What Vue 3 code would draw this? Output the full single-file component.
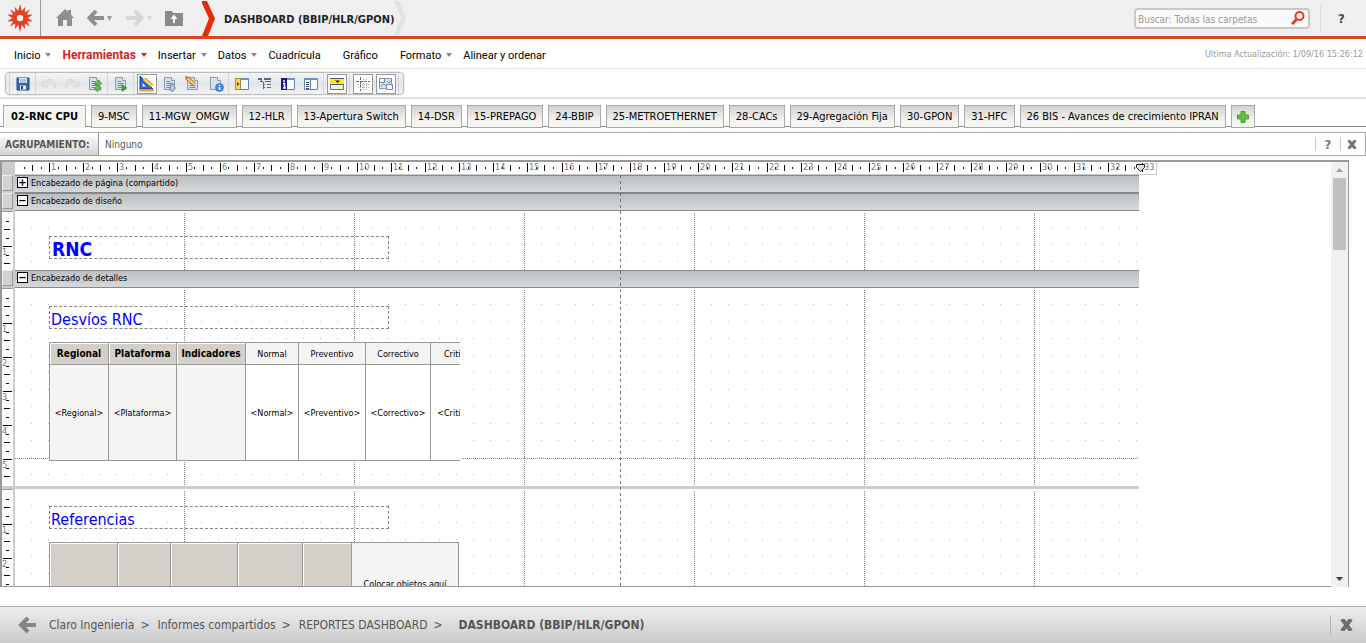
<script setup>
const menu = [
  { label: 'Inicio', arrow: true },
  { label: 'Herramientas', arrow: true, active: true },
  { label: 'Insertar', arrow: true },
  { label: 'Datos', arrow: true },
  { label: 'Cuadrícula' },
  { label: 'Gráfico' },
  { label: 'Formato', arrow: true },
  { label: 'Alinear y ordenar' },
]
const toolGroups = [
  [{ id: 'save', label: 'Guardar' }],
  [{ id: 'undo', label: 'Deshacer' }, { id: 'redo', label: 'Rehacer' }, { id: 'refresh', label: 'Actualizar' }],
  [{ id: 'run', label: 'Ejecutar' }],
  [{ id: 'design', label: 'Diseño', on: true }, { id: 'doc', label: 'Documento' }, { id: 'edit', label: 'Editar' }, { id: 'info', label: 'Información' }],
  [{ id: 'panel', label: 'Objetos' }, { id: 'tree', label: 'Estructura' }, { id: 'ipanel', label: 'Detalles' }, { id: 'list', label: 'Lista' }],
  [{ id: 'band', label: 'Bandas', on: true }],
  [{ id: 'grid', label: 'Mostrar cuadrícula', on: true }, { id: 'snap', label: 'Alinear', on: true }],
]
const tabs = ['02-RNC CPU', '9-MSC', '11-MGW_OMGW', '12-HLR', '13-Apertura Switch', '14-DSR', '15-PREPAGO', '24-BBIP', '25-METROETHERNET', '28-CACs', '29-Agregación Fija', '30-GPON', '31-HFC', '26 BIS - Avances de crecimiento IPRAN']
const columns = ['Regional', 'Plataforma', 'Indicadores', 'Normal', 'Preventivo', 'Correctivo', 'Critico']
const crumbs = ['Claro Ingenieria', 'Informes compartidos', 'REPORTES DASHBOARD']

const hTicks = Array.from({ length: 132 }, (_, i) => ({ n: i + 1, x: Math.round((i + 1) * 8.54) }))
const vTicks = (count) => Array.from({ length: count }, (_, i) => ({ n: i + 1, y: Math.round((i + 1) * 8.5) }))
const shortTicks = vTicks(6)
const tallTicks = vTicks(22)
const lastTicks = vTicks(11)
const majors = [169, 339, 509, 679, 849, 1019]
</script>

<template>
  <div class="app">
    <header class="top">
      <a class="logo" href="#" aria-label="Inicio">
        <svg width="26" height="28" viewBox="0 0 26 28">
          <path fill="#e2401f" d="M13 0l1.800 7 3.400-4.200-.5 5.600 5.300-2.900-3.200 5 6 .3-5.200 3.200 5.200 3.200-6 .3 3.200 5-5.300-2.900.5 5.600-3.400-4.200L13 28l-1.800-7-3.400 4.200.5-5.600L3 22.500l3.200-5-6-.3L5.400 14 .2 10.800l6-.3L3 5.500l5.300 2.900-.5-5.600L11.200 7z" />
          <circle cx="13" cy="14" r="3.200" fill="#efefef" />
        </svg>
      </a>
      <nav class="nav">
        <button class="bare" aria-label="Página de inicio">
          <svg width="18" height="18" viewBox="0 0 18 18" fill="#8e8e8e"><path d="M9 0l3 2.800V1h3v4.700L18 9h-2v8h-5v-6H7v6H2V9H0z" /></svg>
        </button>
        <button class="bare" aria-label="Atrás">
          <svg width="26" height="18" viewBox="0 0 26 18"><path d="M9 2L2.500 9 9 16M3 9h14" fill="none" stroke="#8e8e8e" stroke-width="4" /><path d="M20 7h5l-2.500 5z" fill="#999" /></svg>
        </button>
        <button class="bare" aria-label="Adelante">
          <svg width="26" height="18" viewBox="0 0 26 18"><path d="M9 2l6.500 7L9 16M15 9H0" fill="none" stroke="#d6d6d6" stroke-width="4" /><path d="M21 7h5l-2.500 5z" fill="#d6d6d6" /></svg>
        </button>
        <button class="bare" aria-label="Carpeta superior">
          <svg width="18" height="16" viewBox="0 0 18 16"><path d="M0 1h7l1 2h10v13H0z" fill="#8a8a8a" /><path d="M9 4.500L5.500 9H8v4h2V9h2.500z" fill="#fff" /></svg>
        </button>
      </nav>
      <svg width="15" height="36" viewBox="0 0 15 36"><path d="M-1 1h6l8 17.500L6 36H0l7-17.500z" fill="#e8290b" /></svg>
      <h1 class="crumb-title">DASHBOARD (BBIP/HLR/GPON)</h1>
      <svg width="14" height="36" viewBox="0 0 14 36"><path d="M0 1h5l7 17-7 17H0l7-17z" fill="#e2e2e2" /></svg>
      <label class="search">
        <input type="text" placeholder="Buscar: Todas las carpetas" aria-label="Buscar" />
        <svg width="14" height="14" viewBox="0 0 14 14" fill="none" stroke="#e8371c"><circle cx="8.500" cy="5" r="4" stroke-width="2" /><path d="M5.500 8.500L1 13" stroke-width="3" /></svg>
      </label>
      <button class="bare help" aria-label="Ayuda">?</button>
    </header>

    <div class="menubar">
      <nav class="menu">
        <button v-for="m in menu" :key="m.label" class="bare item" :class="{ active: m.active }">
          <span>{{ m.label }}</span><i class="caret" :class="{ none: !m.arrow }"></i>
        </button>
      </nav>
      <span class="updated">Última Actualización: 1/09/16 15:26:12</span>
    </div>

    <div class="toolrow">
      <div class="toolbar">
        <div v-for="(g, gi) in toolGroups" :key="gi" class="group">
          <button v-for="t in g" :key="t.id" class="bare tool" :class="{ on: t.on }" :aria-label="t.label">
            <svg width="16" height="16" viewBox="0 0 16 16">
              <template v-if="t.id === 'save'">
                <path d="M2 2h12v12H2z" fill="#3767b0" stroke="#234a88" /><path d="M4 2h8v5H4z" fill="#dfeaf8" /><path d="M5 4h6M5 6h6" stroke="#7d9cc8" /><path d="M5 9.500h6v4H5z" fill="#e9eff7" /><path d="M6 10h2v3H6z" fill="#23407a" />
              </template>
              <path v-else-if="t.id === 'undo'" d="M1 5v6h6L5 9q3-4 7-1 2 2 2 4 2-4-1-7-4-4-9 1L3 7z" fill="#e2e2d9" stroke="#d2d3cc" stroke-width=".6" />
              <path v-else-if="t.id === 'redo'" d="M15 5v6H9l2-2Q8 5 4 8q-2 2-2 4-2-4 1-7 4-4 9 1l1 1z" fill="#e2e2d9" stroke="#d2d3cc" stroke-width=".6" />
              <template v-else-if="['refresh', 'run', 'doc', 'edit', 'info'].includes(t.id)">
                <path d="M2.500 1.500h7l3 3v9h-10z" fill="#d5dfee" stroke="#8799b5" /><path d="M9.500 1.500v3h3" fill="#fff" stroke="#8799b5" />
                <path v-if="t.id !== 'info'" d="M4.500 5.500h4M4.500 7.500h6M4.500 9.500h6M4.500 11.500h6" stroke="#6f86aa" />
                <path v-if="t.id === 'refresh'" d="M8 6h3V4l4 3.500-4 3V9H8zM14 11h-3V9.500L7 13l4 3v-2h3z" fill="#5cb84f" stroke="#2f8a2b" stroke-width=".5" />
                <path v-if="t.id === 'run'" d="M9 8.500l5 3.500-5 3.500z" fill="#3fa535" stroke="#2b8527" stroke-width=".5" />
                <path v-if="t.id === 'doc'" d="M9 8h3v2l1.500 2-1.500 2-2 1.500L8 14z" fill="#b8c7dd" stroke="#7388aa" />
                <template v-if="t.id === 'edit'"><path d="M2 2l7 6" stroke="#a8812c" stroke-width="4" /><path d="M2 2l7 6" stroke="#ffd75b" stroke-width="2" /><path d="M0 0l3.500 1-2.500 3z" fill="#d35a3f" /></template>
                <template v-if="t.id === 'info'"><circle cx="11.500" cy="11.500" r="4" fill="#4c8be0" stroke="#2c63b5" stroke-width=".6" /><path d="M11.500 9v1M11.500 11v3" stroke="#fff" stroke-width="1.500" /></template>
              </template>
              <template v-else-if="t.id === 'design'">
                <path d="M1 0v13h13z" fill="#2c63cc" stroke="#173d92" /><path d="M3.500 7v3.500H7z" fill="#fff" /><path d="M5 3l8 7" stroke="#b98a28" stroke-width="4" /><path d="M5 3l8 7" stroke="#ffd97a" stroke-width="2" /><path d="M0 14.500h15" stroke="#e2a723" stroke-width="2" />
              </template>
              <template v-else-if="['panel', 'ipanel', 'list'].includes(t.id)">
                <path d="M1.500 2.500h13v11h-13z" fill="#f7fafd" stroke="#6682ad" /><path d="M1 2h14v2H1z" fill="#7090c4" />
                <path v-if="t.id === 'panel'" d="M1.500 2.500h5v11h-5z" fill="#ffd35c" stroke="#b18a32" /><path v-if="t.id === 'panel'" d="M3 6v4l2.500-2z" fill="#553c00" />
                <template v-if="t.id === 'ipanel'"><path d="M1 2h6v12H1z" fill="#1c1688" /><path d="M4 4v2M3 7.500h1.500V12M3 12h3" stroke="#fff" stroke-width="1.500" fill="none" /></template>
                <path v-if="t.id === 'list'" d="M3 6.500h3M3 8.500h3M3 10.500h3M3 12.500h3" stroke="#404a5c" /><path v-if="t.id === 'list'" d="M7.500 4v10" stroke="#6682ad" />
              </template>
              <path v-else-if="t.id === 'tree'" d="M1 2.500h4M7 2.500h7M3 5.500h3M8 5.500h6M6 8.500h2M10 8.500h4M6 11.500h2M10 11.500h4M1 3.500h4M7 3.500h7M4.500 3v3M6.500 6v7" stroke="#5b687b" fill="none" />
              <template v-else-if="t.id === 'band'">
                <path d="M1.500 2.500h13v11h-13z" fill="#f4f2df" stroke="#66738a" /><path d="M1 3h14v6H1z" fill="#ffe81c" /><path d="M1 2h14v1H1zM1 8h14v1H1z" fill="#4c5f86" /><path d="M6 4.500h5L8.500 7z" fill="#222" />
              </template>
              <template v-else-if="t.id === 'grid'">
                <path d="M5.500 1v14M1 5.500h14" stroke="#666" stroke-dasharray="3 1" /><path d="M8.500 3v12M11.500 3v12M3 8.500h12M3 11.500h12" stroke="#aaa" stroke-dasharray="1 1" />
              </template>
              <template v-else>
                <path d="M1.500 2.500h12v10h-12z" fill="#dbe4f1" stroke="#8294b5" /><path d="M1.500 2.500h5v4h-5zM8.500 8.500h6v5h-6z" fill="#f5f8fc" stroke="#7486a8" /><path d="M3 10l3-2 2 2M9 5l2 2 3-3" fill="none" stroke="#7486a8" />
              </template>
            </svg>
          </button>
        </div>
      </div>
    </div>

    <div class="tabs">
      <button v-for="(t, i) in tabs" :key="t" class="tab" :class="{ current: i === 0 }">{{ t }}</button>
      <button class="tab plus" aria-label="Agregar">
        <svg width="12" height="12" viewBox="0 0 12 12"><path d="M4 .5h4V4h3.500v4H8v3.500H4V8H.5V4H4z" fill="#62bf45" stroke="#4b9d3c" /></svg>
      </button>
    </div>

    <div class="groupbar">
      <span class="glabel">AGRUPAMIENTO:</span>
      <span class="gvalue">Ninguno</span>
      <button class="bare gbtn" aria-label="Ayuda">?</button>
      <button class="bare gbtn" aria-label="Cerrar"><svg width="10" height="9" viewBox="0 0 10 9"><path d="M1.500 0l7 9M8.500 0l-7 9" stroke="#777" stroke-width="3" /></svg></button>
    </div>

    <main class="canvas">
      <div class="view">
        <div class="hrule">
          <div class="corner"></div>
          <svg class="hscale" width="1142" height="13">
            <template v-for="t in hTicks" :key="t.n">
              <rect v-if="t.n % 4 === 0" :x="t.x" y="1" width="1" height="9" fill="#000" />
              <rect v-else-if="t.n % 2 === 0" :x="t.x" y="3" width="1" height="6" fill="#111" />
              <rect v-else :x="t.x" y="5" width="1" height="2" fill="#111" />
              <text v-if="t.n % 4 === 0" :x="t.x + 2" y="8">{{ t.n / 4 }}</text>
            </template>
            <path d="M1121.500 2.500h8v3l-4 4-4-4z" fill="#ddd" stroke="#222" />
          </svg>
        </div>

        <section class="bandrow"><div class="cell"></div><div class="band"><button class="fold" aria-label="Expandir">+</button><span>Encabezado de página (compartido)</span></div></section>
        <section class="bandrow"><div class="cell"></div><div class="band"><button class="fold" aria-label="Contraer">−</button><span>Encabezado de diseño</span></div></section>

        <section class="body plain">
          <svg class="vrule" width="11"><template v-for="t in shortTicks" :key="t.n"><rect :x="t.n % 4 === 0 ? 1 : t.n % 2 === 0 ? 2 : 4" :y="t.y" :width="t.n % 4 === 0 ? 9 : t.n % 2 === 0 ? 6 : 3" height="1" /><text v-if="t.n % 4 === 0" x="0" :y="t.y + 9">{{ t.n / 4 }}</text></template></svg>
          <div class="sheet short">
            <svg class="gridlines" width="100%" height="100%">
              <defs><pattern id="dots" width="17" height="17" patternUnits="userSpaceOnUse"><rect x="16" y="16" width="1" height="1" fill="#bdbdbd" /></pattern></defs>
              <rect width="100%" height="100%" fill="url(#dots)" />
              <line v-for="x in majors" :key="x" :x1="x + 0.5" :x2="x + 0.5" y1="2" y2="100%" class="major" />
            </svg>
            <div class="box strong">RNC</div>
          </div>
        </section>

        <section class="bandrow"><div class="cell"></div><div class="band"><button class="fold" aria-label="Contraer">−</button><span>Encabezado de detalles</span></div></section>

        <section class="body">
          <svg class="vrule" width="11"><template v-for="t in tallTicks" :key="t.n"><rect :x="t.n % 4 === 0 ? 1 : t.n % 2 === 0 ? 2 : 4" :y="t.y" :width="t.n % 4 === 0 ? 9 : t.n % 2 === 0 ? 6 : 3" height="1" /><text v-if="t.n % 4 === 0" x="0" :y="t.y + 9">{{ t.n / 4 }}</text></template></svg>
          <div class="sheet">
            <svg class="gridlines" width="100%" height="100%">
              <rect width="100%" height="100%" fill="url(#dots)" />
              <line v-for="x in majors" :key="x" :x1="x + 0.5" :x2="x + 0.5" y1="2" y2="100%" class="major" />
              <line x1="0" x2="100%" y1="170.5" y2="170.5" class="major" />
            </svg>
            <div class="box">Desvíos RNC</div>
            <div class="clip">
              <table class="data">
                <colgroup><col class="w59" /><col class="w68" /><col class="w69" /><col class="w53" /><col class="w67" /><col class="w65" /><col class="w53" /></colgroup>
                <thead><tr><th v-for="(c, i) in columns" :key="c" :class="{ metric: i > 2 }">{{ c }}</th></tr></thead>
                <tbody><tr><td v-for="(c, i) in columns" :key="c" :class="{ metric: i > 2 }">{{ i === 2 ? '' : `<${c}>` }}</td></tr></tbody>
              </table>
            </div>
          </div>
        </section>

        <section class="body plain">
          <svg class="vrule" width="11"><template v-for="t in lastTicks" :key="t.n"><rect :x="t.n % 4 === 0 ? 1 : t.n % 2 === 0 ? 2 : 4" :y="t.y" :width="t.n % 4 === 0 ? 9 : t.n % 2 === 0 ? 6 : 3" height="1" /><text v-if="t.n % 4 === 0" x="0" :y="t.y + 9">{{ t.n / 4 }}</text></template></svg>
          <div class="sheet final">
            <svg class="gridlines" width="100%" height="100%">
              <rect width="100%" height="100%" fill="url(#dots)" />
              <line v-for="x in majors" :key="x" :x1="x + 0.5" :x2="x + 0.5" y1="2" y2="100%" class="major" />
            </svg>
            <div class="box">Referencias</div>
            <table class="data refs">
              <colgroup><col class="w68" /><col class="w53" /><col class="w67" /><col class="w65" /><col class="w49" /><col class="w107" /></colgroup>
              <tbody><tr><th></th><th></th><th></th><th></th><th></th><td>Colocar objetos aquí</td></tr></tbody>
            </table>
          </div>
        </section>
        <div class="pagebreak"></div>
      </div>
      <div class="scroll">
        <svg width="7" height="4" viewBox="0 0 7 4"><path d="M0 4h7L3.500 0z" fill="#a0a0a0" /></svg>
        <div class="thumb"></div>
        <svg width="7" height="4" viewBox="0 0 7 4"><path d="M0 0h7L3.500 4z" fill="#404040" /></svg>
      </div>
    </main>

    <footer class="foot">
      <button class="bare fback" aria-label="Volver"><svg width="19" height="18" viewBox="0 0 19 18"><path d="M10 2L3 9l7 7M3 9h15" fill="none" stroke="#858585" stroke-width="4" /></svg></button>
      <template v-for="c in crumbs" :key="c"><a href="#">{{ c }}</a><span class="gt">&gt;</span></template>
      <strong>DASHBOARD (BBIP/HLR/GPON)</strong>
      <button class="bare fclose" aria-label="Cerrar"><svg width="13" height="12" viewBox="0 0 13 12"><path d="M2 0l9 12M11 0L2 12" stroke="#6d6d6d" stroke-width="4" /></svg></button>
    </footer>
  </div>
</template>

<style>
body { margin: 0; background: #fff; }
</style>

<style scoped>
* { box-sizing: border-box; }
.app { height: 100vh; min-width: 1280px; display: flex; flex-direction: column; font-family: "DejaVu Sans Condensed", "DejaVu Sans", sans-serif; font-size: 11px; color: #000; overflow: hidden; }
button { font: inherit; color: inherit; }
.bare { border: 0; background: none; padding: 0; display: flex; align-items: center; justify-content: center; }
svg { display: block; flex: none; }

.top { flex: none; height: 39px; display: flex; align-items: center; background: #efefef; border-bottom: 3px solid #e0401f; }
.logo { width: 41px; height: 36px; border-right: 1px solid #999; display: flex; align-items: center; justify-content: center; }
.nav { display: flex; align-items: center; width: 161px; padding-left: 15px; gap: 13px; }
.crumb-title { margin: 3px 0 0 7px; font-size: 11px; font-weight: bold; color: #222; white-space: nowrap; }
.search { margin-left: auto; width: 176px; height: 21px; display: flex; align-items: center; border: 2px solid #c8c8c8; border-radius: 4px; background: #fafafa; padding: 0 3px 0 2px; }
.search input { flex: 1; min-width: 0; border: 0; background: none; padding: 2px 0 0; font: inherit; font-size: 10px; outline: none; }
.search input::placeholder { color: #999; opacity: 1; }
.help { width: 46px; height: 26px; margin-left: 10px; padding-right: 4px; border-left: 1px solid #ddd; font-size: 13px; font-weight: bold; color: #444; }

.menubar { flex: none; height: 30px; display: flex; align-items: center; justify-content: space-between; border-bottom: 1px solid #e4e4e4; }
.menu { display: flex; gap: 11px; padding: 3px 0 0 14px; font-family: Roboto, sans-serif; }
.item { white-space: nowrap; }
.caret { width: 6px; margin-left: 5px; border: solid transparent; border-width: 4px 3px 0; border-top-color: #888; }
.active { color: #dd1d21; font-weight: bold; font-size: 12px; }
.active .caret { border-top-color: #dd1d21; }
.caret.none { visibility: hidden; }
.updated { font-size: 9px; color: #999; padding-right: 3px; }

.toolrow { flex: none; height: 30px; padding: 3px 5px 0; border-bottom: 2px solid #dcdcdc; }
.toolbar { width: max-content; height: 23px; display: flex; border: 1px solid #bcbcbc; border-radius: 4px; padding: 0 4px 0 3px; background: linear-gradient(#f4f4f4, #e3e6ea 50%, #f2f2f2); box-shadow: 0 0 0 1px #f0f0f0; }
.group { display: flex; gap: 3px; padding: 0 2px 0 3px; border-left: 1px solid #d5d5d5; align-items: center; }
.group:last-child { border-right: 1px solid #d5d5d5; }
.tool { width: 20px; height: 20px; }
.on { border: 1px solid #999; background: #fff; }

.tabs { flex: none; display: flex; align-items: flex-end; gap: 5px; padding: 6px 3px 0; height: 29px; margin-bottom: 4px; background: linear-gradient(#888, #888) 0 27px / 100% 1px no-repeat; }
.tab { height: 23px; border: 1px solid #aaa; padding: 0 6px; background: linear-gradient(#d5d0cb, #f4f4f1 70%); white-space: nowrap; font-size: 11px; flex: none; }
.current { background: #f4f4f1; border-bottom-color: #f4f4f1; padding: 0 7px; font-weight: bold; }
.plus { width: 24px; padding: 0 5px; }

.groupbar { flex: none; height: 24px; display: flex; align-items: center; border: 1px solid #aaa; border-left: 0; color: #555; font-size: 10px; margin-bottom: 4px; }
.glabel { width: 99px; height: 23px; line-height: 23px; padding-left: 5px; font-weight: bold; background: linear-gradient(#fff, #d4d4d4); border-right: 1px solid #999; border-bottom: 1px solid #999; }
.gvalue { margin: 0 auto 0 6px; }
.gbtn { width: 25px; height: 14px; border-left: 1px solid #ccc; font-size: 13px; font-weight: bold; color: #777; }
.gbtn:last-child { padding-right: 2px; }

.canvas { flex: 1; min-height: 0; display: flex; margin: 0 17px 19px 0; border-top: 2px solid #999; border-right: 1px solid #999; }
.view { position: relative; flex: 1; min-width: 0; overflow: hidden; border-left: 2px solid #999; border-bottom: 1px solid #999; background: linear-gradient(90deg, #ccc 13px, transparent 13px); }
.hrule { display: flex; height: 13px; }
.corner { width: 13px; background: #ccc; }
.hscale { border-right: 1px solid #ccc; border-bottom: 1px solid #ccc; background: #fff; }
.hscale text { font-size: 9px; fill: #777; }
.bandrow { display: flex; width: 1137px; height: 18px; }
.cell { width: 11px; height: 16px; flex: none; background: #d2d2d2; border: 1px solid #999; border-left-color: #eee; border-top-color: #eee; }
.band { flex: 1; margin-left: 2px; display: flex; align-items: flex-start; gap: 3px; padding: 1px 2px 0; background: linear-gradient(#bcbec0, #d6dadd); border-top: 1px solid #888; border-bottom: 1px solid #888; font-size: 9px; line-height: 13px; }
.fold { width: 11px; height: 11px; padding: 0; border: 1px solid #000; background: #fff; font-size: 11px; line-height: 8px; font-weight: bold; flex: none; }
.body { display: flex; width: 1137px; border-bottom: 3px solid #ccc; }
.plain { border-bottom: 0; }
.vrule { width: 11px; height: auto; background: #fff; overflow: hidden; contain: size; border-top: 1px solid #999; }
.vrule text { font-size: 9px; fill: #777; }
.sheet { position: relative; flex: 1; padding: 18px 0 25px 34px; background: #fff; margin-left: 2px; }
.short { padding: 25px 0 11px 34px; }
.final { padding-top: 17px; }
.gridlines { position: absolute; top: 0; left: 0; }
.major { stroke: #888; stroke-dasharray: 1 1; }
.box { position: relative; width: 340px; height: 23px; border: 1px dashed #888; padding-left: 1px; font-size: 16px; line-height: 25px; color: #00f; }
.box.strong { padding-left: 2px; font-size: 19px; font-weight: bold; }
.clip { position: relative; width: 411px; overflow: hidden; margin-top: 13px; }
.data { position: relative; width: 435px; table-layout: fixed; border-collapse: collapse; background: #fff; }
.data th, .data td { border: 1px solid #999; padding: 0; text-align: center; font-size: 9px; white-space: nowrap; }
.data th { height: 22px; background: #d4cfc8; font-size: 10px; font-weight: bold; box-shadow: inset 1px 1px #fff; }
.data td { height: 96px; background: #f4f4f3; }
.data th.metric { background: #f4f4f3; font-size: 9px; font-weight: normal; box-shadow: none; }
.data td.metric { background: #fff; }
.refs { width: 410px; margin-top: 13px; }
.data.refs td { height: 83px; }
.w49 { width: 49px; }
.w53 { width: 53px; }
.w59 { width: 59px; }
.w65 { width: 65px; }
.w67 { width: 67px; }
.w68 { width: 68px; }
.w69 { width: 69px; }
.w107 { width: 107px; }
.pagebreak { position: absolute; left: 618px; top: 13px; bottom: 0; width: 1px; background: repeating-linear-gradient(#777 0 3px, transparent 3px 6px); }
.scroll { width: 17px; display: flex; flex-direction: column; align-items: center; background: #f0f0f0; padding: 6px 0; }
.thumb { width: 13px; height: 72px; background: #c1c1c1; margin: 6px 0 auto; }

.foot { flex: none; height: 37px; display: flex; align-items: center; border-top: 1px solid #b0b0b0; background: linear-gradient(#ededed, #cbcbcb); color: #555; font-size: 12px; white-space: nowrap; }
.foot a { color: inherit; text-decoration: none; }
.fback { margin: 0 12px 0 18px; }
.gt { margin: 0 8px 0 6px; }
.foot strong { margin-left: 8px; }
.fclose { margin-left: auto; width: 36px; height: 20px; border-left: 1px solid #b5b5b5; padding-right: 4px; }
</style>
